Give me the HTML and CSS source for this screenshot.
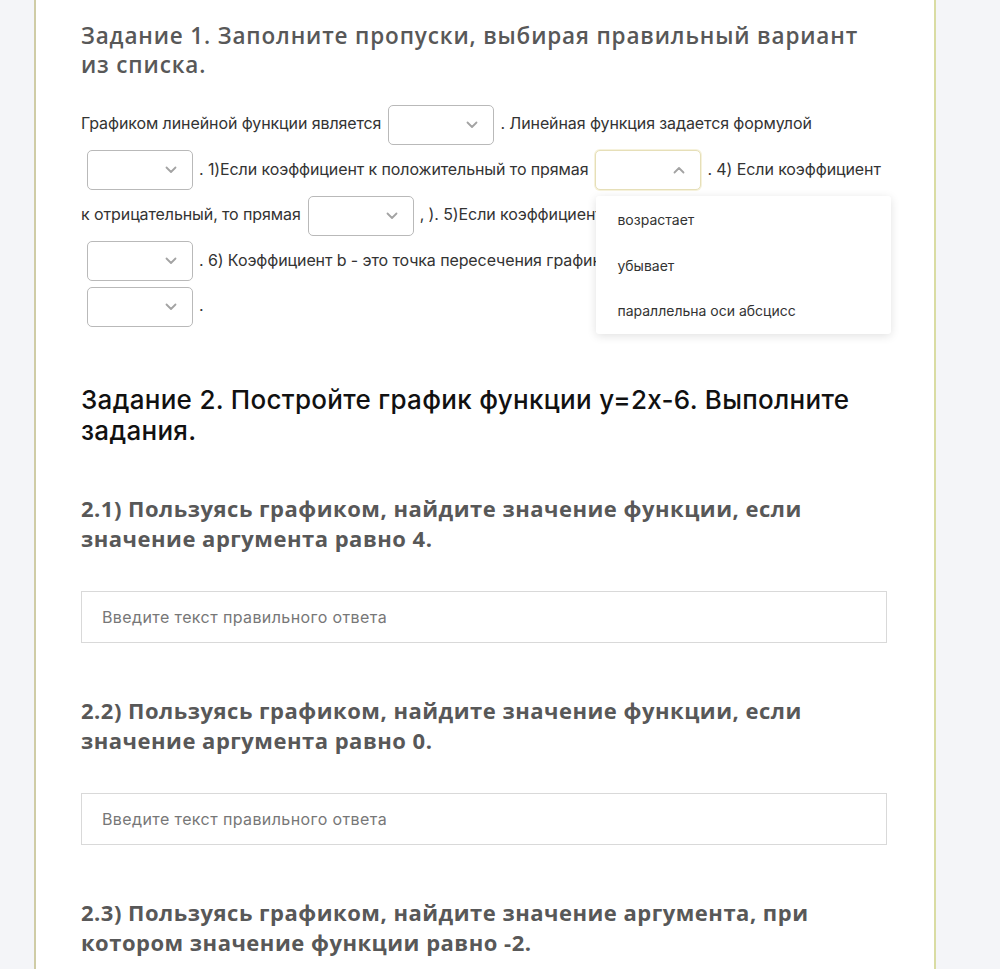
FILE: index.html
```html
<!DOCTYPE html>
<html lang="ru">
<head>
<meta charset="utf-8">
<title>Задания</title>
<link rel="stylesheet" href="styles.css">
</head>
<body>
<div class="page">
  <main class="card">
    <section class="task1">
      <h2 class="title-gray title-task1">Задание 1. Заполните пропуски, выбирая правильный вариант из списка.</h2>
      <div class="fill">
        <div class="line">Графиком линейной функции является<span class="sel"><svg class="chev" viewBox="0 0 12 8"><path d="M1.5 1.5 L6 6 L10.5 1.5"/></svg></span>. Линейная функция задается формулой</div>
        <div class="line"><span class="sel sel-first"><svg class="chev" viewBox="0 0 12 8"><path d="M1.5 1.5 L6 6 L10.5 1.5"/></svg></span>. 1)Если коэффициент к положительный то прямая<span class="sel sel-open"><svg class="chev" viewBox="0 0 12 8"><path d="M1.5 6.5 L6 2 L10.5 6.5"/></svg><span class="menu"><span class="opt">возрастает</span><span class="opt">убывает</span><span class="opt">параллельна оси абсцисс</span></span></span>. 4) Если коэффициент</div>
        <div class="line">к отрицательный, то прямая<span class="sel"><svg class="chev" viewBox="0 0 12 8"><path d="M1.5 1.5 L6 6 L10.5 1.5"/></svg></span>, ). 5)Если коэффициент к равен нулю, то прямая</div>
        <div class="line"><span class="sel sel-first"><svg class="chev" viewBox="0 0 12 8"><path d="M1.5 1.5 L6 6 L10.5 1.5"/></svg></span>. 6) Коэффициент b - это точка пересечения графика с осью</div>
        <div class="line"><span class="sel sel-first"><svg class="chev" viewBox="0 0 12 8"><path d="M1.5 1.5 L6 6 L10.5 1.5"/></svg></span>.</div>
      </div>
    </section>

    <section class="task2">
      <h2 class="title-dark">Задание 2. Постройте график функции y=2x-6. Выполните задания.</h2>

      <div class="q q-first">
        <h3 class="title-gray q-title">2.1) Пользуясь графиком, найдите значение функции, если значение аргумента равно 4.</h3>
        <div class="answer">Введите текст правильного ответа</div>
      </div>

      <div class="q">
        <h3 class="title-gray q-title">2.2) Пользуясь графиком, найдите значение функции, если значение аргумента равно 0.</h3>
        <div class="answer">Введите текст правильного ответа</div>
      </div>

      <div class="q">
        <h3 class="title-gray q-title">2.3) Пользуясь графиком, найдите значение аргумента, при котором значение функции равно -2.</h3>
      </div>
    </section>
  </main>
</div>
</body>
</html>
```

FILE: styles.css
```css
html, body {
  margin: 0;
  padding: 0;
  background: #f4f5f8;
}
body {
  font-family: Inter, "Noto Sans", sans-serif;
  color: #333;
}
.page {
  display: flex;
  padding-left: 34px;
  height: 969px;
  overflow: hidden;
}
.card {
  box-sizing: border-box;
  width: 902px;
  background: #ffffff;
  border-left: 2px solid #cfcca6;
  border-right: 2px solid #d9dca3;
  padding: 21px 45px 0 45px;
  min-height: 1100px;
}
.title-gray {
  margin: 0;
  font-family: "Open Sans", sans-serif;
  font-weight: 700;
  font-size: 22px;
  line-height: 30px;
  color: #585858;
  letter-spacing: 0.5px;
}
.title-task1 {
  font-weight: 600;
  font-size: 22.5px;
  line-height: 29px;
  letter-spacing: 0.85px;
}
.title-dark {
  margin: 0;
  font-family: Inter, sans-serif;
  font-weight: 500;
  font-size: 26px;
  line-height: 31px;
  color: #111;
  letter-spacing: 0.3px;
}
.fill {
  margin-top: 22px;
  font-size: 16px;
  color: #333;
  letter-spacing: -0.1px;
}
.line {
  height: 45.5px;
  line-height: 45.5px;
  white-space: nowrap;
}
.sel {
  position: relative;
  display: inline-flex;
  vertical-align: middle;
  align-items: center;
  justify-content: flex-end;
  box-sizing: border-box;
  width: 106px;
  height: 40px;
  margin: 0 6px 0 7px;
  padding-right: 15px;
  border: 1px solid #b9b9b9;
  border-radius: 5px;
  background: #fff;
  line-height: normal;
}
.sel-first {
  margin-left: 6px;
}
.sel-open {
  border-color: #e6dfb8;
  box-shadow: 0 0 0 1px #f6f2dc;
}
.chev {
  width: 12px;
  height: 8px;
  fill: none;
  stroke: #a3a3a3;
  stroke-width: 1.8;
  stroke-linecap: round;
  stroke-linejoin: round;
}
.menu {
  position: absolute;
  top: 45px;
  left: 0;
  z-index: 5;
  width: 295px;
  box-sizing: border-box;
  padding: 1px 0 0 0;
  display: flex;
  flex-direction: column;
  background: #fff;
  border-radius: 3px;
  box-shadow: 0 2px 10px rgba(0, 0, 0, 0.12);
}
.opt {
  height: 45.5px;
  display: flex;
  align-items: center;
  padding-left: 21px;
  font-size: 14px;
  color: #333;
  letter-spacing: 0;
}
.task2 {
  margin-top: 55px;
}
.q {
  margin-top: 52px;
}
.q-first {
  margin-top: 47px;
}
.answer {
  margin-top: 38px;
  box-sizing: border-box;
  height: 52px;
  width: 806px;
  border: 1px solid #d9d9d9;
  padding-left: 20px;
  display: flex;
  align-items: center;
  font-size: 16px;
  color: #777;
  letter-spacing: 0.4px;
}
```
